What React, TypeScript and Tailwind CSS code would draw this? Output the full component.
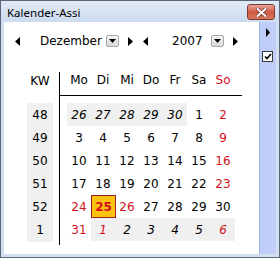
import React from 'react';

type Cell = { d: number; other?: boolean; red?: boolean; today?: boolean };

const weeks: { kw: number; days: Cell[] }[] = [
  {
    kw: 48,
    days: [
      { d: 26, other: true }, { d: 27, other: true }, { d: 28, other: true },
      { d: 29, other: true }, { d: 30, other: true }, { d: 1 }, { d: 2, red: true },
    ],
  },
  { kw: 49, days: [{ d: 3 }, { d: 4 }, { d: 5 }, { d: 6 }, { d: 7 }, { d: 8 }, { d: 9, red: true }] },
  { kw: 50, days: [{ d: 10 }, { d: 11 }, { d: 12 }, { d: 13 }, { d: 14 }, { d: 15 }, { d: 16, red: true }] },
  { kw: 51, days: [{ d: 17 }, { d: 18 }, { d: 19 }, { d: 20 }, { d: 21 }, { d: 22 }, { d: 23, red: true }] },
  {
    kw: 52,
    days: [
      { d: 24, red: true }, { d: 25, today: true }, { d: 26, red: true },
      { d: 27 }, { d: 28 }, { d: 29 }, { d: 30 },
    ],
  },
  {
    kw: 1,
    days: [
      { d: 31, red: true }, { d: 1, other: true, red: true }, { d: 2, other: true },
      { d: 3, other: true }, { d: 4, other: true }, { d: 5, other: true }, { d: 6, other: true, red: true },
    ],
  },
];

const dayNames = ['Mo', 'Di', 'Mi', 'Do', 'Fr', 'Sa', 'So'];

const ArrowLeft = () => (
  <svg width="5" height="9" viewBox="0 0 5 9" className="shrink-0">
    <polygon points="5,0 5,9 0,4.5" fill="#000" />
  </svg>
);

const ArrowRight = () => (
  <svg width="5" height="9" viewBox="0 0 5 9" className="shrink-0">
    <polygon points="0,0 0,9 5,4.5" fill="#000" />
  </svg>
);

const DropButton = () => (
  <div className="w-[13px] h-[12px] shrink-0 border border-[#a7a7a7] rounded-[2px] bg-gradient-to-b from-[#f6f6f6] to-[#d9d9d9] flex items-center justify-center">
    <svg width="7" height="4" viewBox="0 0 7 4">
      <polygon points="0,0 7,0 3.5,4" fill="#000" />
    </svg>
  </div>
);

export default function App() {
  return (
    <div className="w-[280px] h-[258px] border border-[#5b6577] bg-[#d3e0f1] flex flex-col font-['DejaVu_Sans',sans-serif] text-black">
      {/* Title bar */}
      <div className="h-[21px] flex items-center justify-between pl-[6px] pr-[4px] bg-gradient-to-b from-[#e1eaf6] to-[#cddbef]">
        <span className="text-[11.5px] font-['Noto_Sans',sans-serif] leading-none mt-[2px]">Kalender-Assi</span>
        <div className="w-[28px] h-[16px] mt-[1px] rounded-[3px] border border-[#7d3a30] bg-gradient-to-b from-[#e8a899] via-[#cf5a44] to-[#d9745e] flex items-center justify-center">
          <svg width="11" height="9" viewBox="0 0 11 9">
            <path d="M1.5 1 L9.5 8 M9.5 1 L1.5 8" stroke="#6b2a22" strokeWidth="3.4" strokeLinecap="round" />
            <path d="M1.5 1 L9.5 8 M9.5 1 L1.5 8" stroke="#fff" strokeWidth="2" strokeLinecap="round" />
          </svg>
        </div>
      </div>

      {/* Body */}
      <div className="flex-1 flex px-[3px] pb-[3px]">
        <div className="w-[256px] bg-white flex flex-col">
          {/* Month / year navigation */}
          <div className="h-[14px] mt-[12px] flex items-center text-[12px]">
            <div className="ml-[11px]"><ArrowLeft /></div>
            <div className="ml-[20px] w-[66px] leading-none">Dezember</div>
            <DropButton />
            <div className="ml-[9px]"><ArrowRight /></div>
            <div className="ml-[10px]"><ArrowLeft /></div>
            <div className="ml-[24px] w-[39px] leading-none">2007</div>
            <DropButton />
            <div className="ml-[9px]"><ArrowRight /></div>
          </div>

          {/* Calendar grid */}
          <div className="mt-[21px] flex text-[12px]">
            <div className="ml-[23px] w-[26px] flex flex-col">
              <div className="h-[27px] flex items-center justify-center pb-[4px]">KW</div>
              <div className="mt-[7px] bg-[#f0f0f0] flex flex-col pb-[1px]">
                {weeks.map((w) => (
                  <div key={w.kw} className="h-[23px] flex items-center justify-center">{w.kw}</div>
                ))}
              </div>
            </div>

            <div className="ml-[6px] mt-[3px] w-[1px] h-[173px] bg-black" />

            <div className="flex flex-col">
              <div className="w-[182px] h-[27px] border-b border-black pl-[7px] pb-[4px] flex items-center">
                {dayNames.map((n) => (
                  <div key={n} className={`w-[24px] text-center ${n === 'So' ? 'text-[#d40f1b]' : ''}`}>{n}</div>
                ))}
              </div>
              <div className="mt-[7px] pl-[7px] flex flex-col">
                {weeks.map((w) => (
                  <div key={w.kw} className="h-[23px] flex">
                    {w.days.map((c, i) =>
                      c.today ? (
                        <div key={i} className="w-[25px] h-[23px] -mr-[1px] bg-[#ffc20e] border border-[#9c1f24] flex items-center justify-center font-bold text-[#d40f1b]">
                          {c.d}
                        </div>
                      ) : (
                        <div
                          key={i}
                          className={`w-[24px] h-[23px] flex items-center justify-center ${c.other ? 'bg-[#f0f0f0] italic' : ''} ${c.red ? 'text-[#d40f1b]' : ''}`}
                        >
                          {c.d}
                        </div>
                      )
                    )}
                  </div>
                ))}
              </div>
            </div>
          </div>
        </div>

        {/* Side panel */}
        <div className="w-[17px] bg-[#bfcdf8] border-l border-[#9fb2e3] flex flex-col items-start">
          <div className="ml-[6px] mt-[6px]">
            <svg width="4" height="9" viewBox="0 0 4 9">
              <polygon points="0,0 0,9 4,4.5" fill="#000" />
            </svg>
          </div>
          <div className="ml-[2px] mt-[14px] w-[11px] h-[11px] bg-white border border-[#3a3a3a] flex items-center justify-center">
            <svg width="8" height="7" viewBox="0 0 8 7">
              <path d="M1 3.5 L3 5.5 L7 1" stroke="#000" strokeWidth="1.6" fill="none" />
            </svg>
          </div>
        </div>
      </div>
    </div>
  );
}
